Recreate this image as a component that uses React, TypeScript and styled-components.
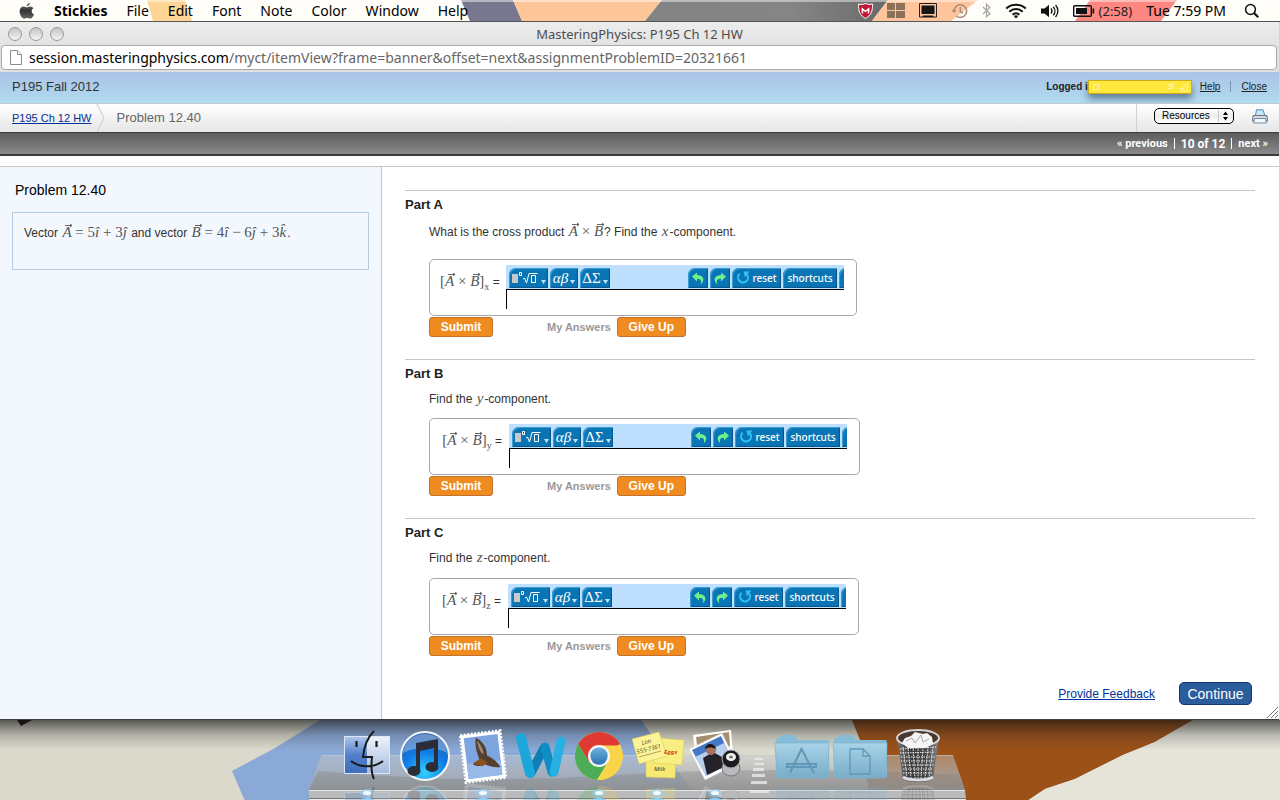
import React from "react";
import styled, { createGlobalStyle } from "styled-components";

const SANS = '"Liberation Sans", Arial, sans-serif';
const SYSTEM = '"Noto Sans", "Open Sans", sans-serif';
const NARROW = 'Roboto, "Liberation Sans", sans-serif';
const MATH = '"Liberation Serif", "Times New Roman", serif';

const GlobalStyle = createGlobalStyle`
  * { box-sizing: border-box; }
  body { margin: 0; background: #d6d4c6; font-family: ${SANS}; }
  button, input, select { font-family: inherit; margin: 0; }
  svg { display: block; }
`;

const Desktop = styled.div`
  min-height: 100vh;
  display: flex;
  flex-direction: column;
`;

/* ---------- menu bar ---------- */

const MenuBarRoot = styled.header`
  position: relative;
  height: 22px;
  display: flex;
  align-items: center;
  background: #fffdf8;
  border-bottom: 1px solid #555;
  font-family: ${SYSTEM};
  overflow: hidden;
`;

const Backdrop = styled.svg`
  position: absolute;
  inset: 0;
  width: 100%;
  height: 100%;
`;

const MenuList = styled.nav`
  position: relative;
  display: flex;
  align-items: center;
  gap: 19px;
  padding-left: 19px;
`;

const MenuButton = styled.button<{ $strong?: boolean }>`
  border: 0;
  padding: 0;
  background: none;
  color: #000;
  font-size: 14px;
  line-height: 20px;
  font-weight: ${(p) => (p.$strong ? 700 : 400)};
  white-space: nowrap;
`;

const StatusList = styled.div`
  position: relative;
  margin-left: auto;
  padding-right: 20px;
  display: flex;
  align-items: center;
  gap: 14px;
`;

const BatteryStatus = styled.div`
  display: flex;
  align-items: center;
  gap: 4px;
  font-size: 13px;
  line-height: 20px;
  color: #222;
`;

const Clock = styled.time`
  margin-right: 4px;
  font-size: 14px;
  line-height: 20px;
  white-space: nowrap;
`;

/* ---------- browser window ---------- */

const BrowserWindow = styled.main`
  margin-right: 1px;
  background: #fff;
  border-bottom: 1px solid #3f3f3f;
  border-radius: 5px 5px 0 0;
  display: flex;
  flex-direction: column;
`;

const TitleBar = styled.div`
  height: 23px;
  display: grid;
  grid-template-columns: 1fr auto 1fr;
  align-items: center;
  background: linear-gradient(#ededed, #e2e2e2);
  font-family: ${SYSTEM};
`;

const WindowControls = styled.div`
  display: flex;
  gap: 7px;
  padding-left: 8px;
`;

const WindowControl = styled.button`
  width: 14px;
  height: 14px;
  padding: 0;
  border: 1px solid #999;
  border-radius: 50%;
  background: linear-gradient(#c4c4c4, #f4f4f4);
`;

const WindowTitle = styled.div`
  font-size: 13px;
  line-height: 20px;
  color: #4d4d4d;
`;

const AddressRow = styled.div`
  height: 27px;
  padding: 0 2px 2px 1px;
  background: #e0e0e0;
`;

const AddressBox = styled.div`
  height: 25px;
  display: flex;
  align-items: center;
  gap: 7px;
  padding-left: 8px;
  background: #fff;
  border: 1px solid #a9a9a9;
  border-radius: 4px;
  font-family: ${SYSTEM};
  font-size: 14px;
  line-height: 20px;
  color: #666;
  white-space: nowrap;
  overflow: hidden;
`;

const Host = styled.span`
  color: #000;
`;

/* ---------- course header ---------- */

const CourseBar = styled.div`
  height: 31px;
  display: flex;
  align-items: center;
  justify-content: space-between;
  padding: 0 12px 2px;
  background: linear-gradient(#abc3e8, #b0dbef);
  color: #333;
`;

const CourseName = styled.div`
  font-size: 13px;
  line-height: 16px;
`;

const AccountBox = styled.div`
  display: flex;
  align-items: center;
  font-size: 10px;
  line-height: 14px;
`;

const LoggedIn = styled.strong`
  color: #222;
`;

const StickyNote = styled.div`
  width: 104px;
  height: 14px;
  margin-right: 8px;
  display: flex;
  align-items: center;
  justify-content: space-between;
  padding: 0 3px;
  background: #ffe83b;
  border: 1px solid #c9ac1c;
  box-shadow: 0 5px 7px rgba(40, 60, 90, 0.55);
`;

const NoteCorner = styled.span`
  display: flex;
  gap: 6px;
`;

const SmallLink = styled.a`
  color: #222;
  text-decoration: underline;
`;

const Separator = styled.span<{ $color: string; $gap: number }>`
  width: 1px;
  height: 11px;
  margin: 0 ${(p) => p.$gap}px;
  background: ${(p) => p.$color};
`;

const CrumbBar = styled.div`
  height: 29px;
  display: flex;
  align-items: center;
  padding-left: 12px;
  border-top: 1px solid #c6c9cc;
  background: linear-gradient(#fff, #e6e6e6);
`;

const CrumbLink = styled.a`
  font-size: 11px;
  line-height: 16px;
  color: #003399;
`;

const CrumbArrow = styled.svg`
  margin: 0 11px 0 5px;
`;

const CrumbCurrent = styled.span`
  font-size: 13px;
  line-height: 16px;
  color: #666;
`;

const CrumbTools = styled.div`
  align-self: stretch;
  margin-left: auto;
  display: flex;
  align-items: center;
  gap: 18px;
  padding: 0 11px 4px 17px;
  border-left: 1px solid #d2d2d2;
`;

const SelectWrap = styled.div`
  position: relative;
`;

const ResourceSelect = styled.select`
  appearance: none;
  display: block;
  width: 80px;
  height: 16px;
  padding: 0 7px;
  border: 1px solid #000;
  border-radius: 5px;
  background: linear-gradient(#fff, #ececec 50%, #fff);
  color: #000;
  font-size: 10px;
  line-height: 12px;
`;

const SelectArrows = styled.svg`
  position: absolute;
  right: 4px;
  top: 2px;
  pointer-events: none;
`;

const IconButton = styled.button`
  border: 0;
  padding: 0;
  background: none;
`;

const PagerBar = styled.nav`
  height: 24px;
  display: flex;
  align-items: center;
  justify-content: flex-end;
  padding-right: 11px;
  border-top: 1px solid #3e3e3e;
  border-bottom: 2px solid #3a3a3a;
  background: linear-gradient(#5c5c5c, #8a8a8a);
  color: #fff;
  font-family: ${NARROW};
  font-size: 12px;
  line-height: 16px;
  font-weight: 700;
`;

const PagerLink = styled.a`
  color: #fff;
  text-decoration: none;
  font-size: 11px;
`;

/* ---------- problem panels ---------- */

const Panels = styled.div`
  margin-top: 10px;
  border-top: 1px solid #c4c8cb;
  display: flex;
`;

const ProblemPane = styled.aside`
  flex: 0 0 382px;
  padding: 15px 12px;
  background: #f3f8fe;
  border-right: 1px solid #b9c9d8;
`;

const ProblemTitle = styled.h1`
  margin: 0 3px 13px;
  font-size: 14px;
  line-height: 17px;
  font-weight: 400;
  color: #000;
`;

const ProblemText = styled.div`
  min-height: 58px;
  padding: 10px 11px;
  border: 1px solid #b4cbe0;
  font-size: 12px;
  line-height: 20px;
  color: #333;
  white-space: nowrap;
`;

const AnswerPane = styled.section`
  position: relative;
  flex: 1;
  min-width: 0;
  padding: 23px 24px 14px 23px;
`;

const Part = styled.section`
  border-top: 1px solid #c6c6c6;
  padding: 6px 0 22px;
`;

const PartTitle = styled.h2`
  margin: 0;
  font-size: 13px;
  line-height: 16px;
  color: #222;
`;

const PartBody = styled.form`
  margin: 8px 0 0 24px;
`;

const Question = styled.p<{ $space: number; $tall?: boolean }>`
  margin: 0 0 ${(p) => p.$space}px;
  font-size: 12px;
  line-height: ${(p) => (p.$tall ? 22 : 18)}px;
  color: #333;
`;

const AnswerBox = styled.div`
  width: fit-content;
  height: 57px;
  margin-bottom: 1px;
  padding: 5px 12px 0 10px;
  display: flex;
  border: 1px solid #a6a6a6;
  border-radius: 5px;
`;

const AnswerLabel = styled.label<{ $width: number }>`
  width: ${(p) => p.$width}px;
  padding: 7px 7px 0 0;
  text-align: right;
  white-space: nowrap;
  font-size: 12px;
  line-height: 20px;
  color: #333;

  & > span {
    margin: 0;
  }
`;

const Applet = styled.div`
  width: 338px;
`;

const Toolbar = styled.div`
  height: 24px;
  display: flex;
  gap: 2px;
  padding: 3px 0 1px 3px;
  background: #bfdfff;
  overflow: hidden;
`;

const ToolGap = styled.span`
  flex: 1;
`;

const ToolButton = styled.button<{ $width: number; $greek?: boolean }>`
  flex: none;
  width: ${(p) => p.$width}px;
  height: 20px;
  padding: 0;
  display: flex;
  align-items: center;
  justify-content: center;
  gap: 1px;
  border: 0;
  border-radius: 7px 0 0 0;
  background: #0a75b5;
  box-shadow: inset 1px 1px 1px #3fa0d4, inset -1px -1px 1px #07568a;
  color: #fff;
  font-family: ${(p) => (p.$greek ? MATH : SYSTEM)};
  font-size: ${(p) => (p.$greek ? 15 : 10)}px;
  line-height: 18px;
  font-weight: ${(p) => (p.$greek ? 400 : 500)};
`;

const ClippedTool = styled.span`
  width: 5px;
  overflow: hidden;
`;

const AnswerInput = styled.input`
  display: block;
  width: 100%;
  height: 20px;
  padding: 1px 3px;
  border: 0;
  border-top: 1px solid #000;
  border-left: 1px solid #000;
  background: none;
  outline: none;
  font-size: 12px;
`;

const Actions = styled.div`
  display: flex;
  align-items: center;
`;

const OrangeButton = styled.button<{ $width: number }>`
  width: ${(p) => p.$width}px;
  height: 20px;
  padding: 0;
  border: 1px solid #c4702e;
  border-radius: 3px;
  background: #ef8b1f;
  color: #fff;
  font-size: 12px;
  line-height: 16px;
  font-weight: 700;
`;

const MyAnswers = styled.span`
  margin: 0 6px 0 54px;
  font-size: 11px;
  line-height: 16px;
  font-weight: 700;
  color: #999;
`;

const PaneFooter = styled.footer`
  display: flex;
  align-items: center;
  justify-content: flex-end;
  gap: 24px;
  padding: 4px 3px 0 0;
`;

const FeedbackLink = styled.a`
  font-size: 12px;
  line-height: 16px;
  color: #003399;
`;

const ContinueButton = styled.button`
  width: 73px;
  height: 23px;
  padding: 0;
  border: 1px solid #12386c;
  border-radius: 5px;
  background: #2b5c9b;
  color: #fff;
  font-size: 14px;
  line-height: 18px;
`;

const ResizeGrip = styled.svg`
  position: absolute;
  right: 1px;
  bottom: 1px;
`;

/* ---------- math ---------- */

const MathText = styled.span`
  margin: 0 1px;
  font-family: ${MATH};
  font-size: 15px;
  line-height: 16px;
  color: #555;
  white-space: nowrap;
`;

const MathVar = styled.i`
  position: relative;
`;

const Accent = styled.svg`
  position: absolute;
  left: 3px;
  top: -1px;
`;

const MathSub = styled.sub`
  font-size: 10px;
  line-height: 1px;
`;

const Vec = ({ children }: { children: string }) => (
  <MathVar>
    {children}
    <Accent width="8" height="5" viewBox="0 0 8 5" fill="none" stroke="#555">
      <path d="M0 2.500H7M5 1L7 2.500 5 4" strokeWidth=".9" />
    </Accent>
  </MathVar>
);

const Cross = () => (
  <>
    <Vec>A</Vec> × <Vec>B</Vec>
  </>
);

/* ---------- icons ---------- */

const AppleIcon = () => (
  <svg width="16" height="18" viewBox="0 0 16 18">
    <defs>
      <linearGradient id="apple" x2="0" y2="1">
        <stop stopColor="#777" />
        <stop offset=".5" stopColor="#333" />
        <stop offset="1" stopColor="#666" />
      </linearGradient>
    </defs>
    <path
      fill="url(#apple)"
      d="M10.9.8c.1 1.800-1.500 3.600-3.200 3.500C7.500 2.600 9.200.9 10.900.8zM8 5.400c.7 0 1.800-.9 3.300-.8 1.300.1 2.400.6 3.100 1.600-2.600 1.600-2.200 5 .6 6.100-.6 1.700-2 4.400-3.700 4.400-1.100 0-1.600-.7-3-.7s-2 .7-3 .7C3.200 16.700.6 13 .6 9.500c0-3.200 2-4.900 4.100-4.900 1.400 0 2.500.8 3.300.8z"
    />
  </svg>
);

const ShieldIcon = () => (
  <svg width="15" height="16" viewBox="0 0 15 16">
    <path d="M.6 1Q4 2.200 7.500.6 11 2.200 14.400 1c.5 7-1.400 11.500-6.900 14.400C2 12.500.1 8 .6 1z" fill="#c01735" stroke="#fff" />
    <path d="M3.600 9.600V4.200l3.900 3.200 3.900-3.200v5.400L9.800 11V7.400L7.500 9.300 5.200 7.400V11z" fill="#fff" />
  </svg>
);

const SpacesIcon = () => (
  <svg width="18" height="16" viewBox="0 0 18 16" fill="#8c7059">
    <path d="M0 0h8v7H0zM9 0h9v7H9zM0 8h8v7H0zM9 8h9v7H9z" />
  </svg>
);

const DisplayIcon = () => (
  <svg width="18" height="15" viewBox="0 0 18 15">
    <path d="M3 14H.5V.5h17V14H15" fill="none" stroke="#222" />
    <path d="M2.500 2.500h13v8.500h-13zM4 12.500h10l1.500 2h-13z" fill="#161616" />
  </svg>
);

const TimeMachineIcon = () => (
  <svg width="17" height="16" viewBox="0 0 17 16" fill="none" stroke="#a98c76" strokeWidth="1.500">
    <path d="M3 8a6.300 6.300 0 1 1 2 4.700M9.300 4v4.500l2.700 1.700" />
    <path d="M.5 7h5L3 10z" fill="#a98c76" stroke="none" />
  </svg>
);

const BluetoothIcon = () => (
  <svg width="9" height="15" viewBox="0 0 9 15" fill="none" stroke="#a5a5a5" strokeWidth="1.200">
    <path d="M1 4l7 6.500-3.500 3.300V1.200L8 4.500 1 11" />
  </svg>
);

const WifiIcon = () => (
  <svg width="22" height="16" viewBox="0 0 22 16" fill="none" stroke="#111" strokeWidth="2">
    <path d="M1.200 5.500c5.500-5 14.100-5 19.600 0M4.300 8.800c4-3.600 9.400-3.600 13.400 0M7.500 11.800c2.200-1.900 4.800-1.900 7 0" />
    <path d="M8.800 13l2.200 2.600 2.200-2.600c-1.300-1-3.100-1-4.400 0z" fill="#111" stroke="none" />
  </svg>
);

const SoundIcon = () => (
  <svg width="18" height="14" viewBox="0 0 18 14">
    <path d="M0 4.500h3.500L8 .8v12.400L3.500 9.500H0z" fill="#111" />
    <path d="M10 4.500c1.200 1.500 1.200 3.500 0 5M12.300 2.700c2.200 2.500 2.200 6.100 0 8.600M14.600 1c3 3.500 3 8.500 0 12" fill="none" stroke="#111" strokeWidth="1.300" />
  </svg>
);

const BatteryIcon = () => (
  <svg width="22" height="12" viewBox="0 0 22 12">
    <rect x=".7" y=".7" width="17.600" height="10.600" rx="1" fill="none" stroke="#111" strokeWidth="1.400" />
    <path d="M3 3h11v6H3z" fill="#111" />
    <path d="M19.500 3.500h1.700v5h-1.700z" fill="#111" />
  </svg>
);

const SearchIcon = () => (
  <svg width="16" height="16" viewBox="0 0 16 16" fill="none" stroke="#111">
    <circle cx="6.500" cy="6.500" r="4.900" strokeWidth="1.500" />
    <path d="M10 10l4.300 4.300" strokeWidth="2.200" />
  </svg>
);

const PageIcon = () => (
  <svg width="12" height="15" viewBox="0 0 12 15" fill="#fff" stroke="#8b8b8b">
    <path d="M.5.500h7l4 4v10h-11z" />
    <path d="M7.500.5v4h4" />
  </svg>
);

const PrinterIcon = () => (
  <svg width="16" height="15" viewBox="0 0 16 15">
    <path d="M3.500 6.500L4.500.800h6.500l2 5.700z" fill="#c5e6fa" stroke="#5b8db8" />
    <path d="M1 6.500h14l.5 5.500H.5z" fill="#d5d8dc" stroke="#6b7480" />
    <path d="M2.500 9.500h11l.8 4.500H1.700z" fill="#f4f8fb" stroke="#6b8fae" />
  </svg>
);

const DropMark = () => (
  <svg width="6" height="14" viewBox="0 0 6 14">
    <path d="M1 9h5L3.500 13z" fill="#bfe4fb" />
  </svg>
);

const RootIcon = () => (
  <svg width="28" height="16" viewBox="0 0 28 16" fill="none" stroke="#fff">
    <path d="M1 4h6v9H1z" fill="#c9c9c9" stroke="none" />
    <path d="M8.500 2.500h2v3h-2z" />
    <path d="M12 9l1.500-1 2 5L18 3.500h8.500" />
    <path d="M20.500 5.500h4v7h-4z" />
  </svg>
);

/* the hook starts high on the tail side and curls below the arrow head */
const UndoIcon = () => (
  <svg width="14" height="16" viewBox="0 0 14 16">
    <path d="M1 6.500L6 2.500v2.500c6.500.3 8.500 5 3.500 9.500 1.500-3.500.5-5.600-3.500-5.700v2.700z" fill="#6ff08c" />
  </svg>
);

const RedoIcon = () => (
  <svg width="14" height="16" viewBox="0 0 14 16">
    <path d="M13 6.500L8 2.500v2.500c-6.500.3-8.500 5-3.500 9.500C3 11 4 8.900 8 8.800v2.700z" fill="#6ff08c" />
  </svg>
);

const ResetIcon = () => (
  <svg width="15" height="16" viewBox="0 0 15 16">
    <path d="M3.600 3.800a5 5 0 1 0 7.400.5" fill="none" stroke="#2fc3f3" strokeWidth="2" />
    <path d="M7.500 1.500h5.800L9 7.500z" fill="#2fc3f3" />
  </svg>
);

/* ---------- answer parts ---------- */

type PartProps = {
  id: string;
  question: React.ReactNode;
  axis: string;
  labelWidth: number;
  space: number;
  tall?: boolean;
};

const AnswerPart = ({ id, question, axis, labelWidth, space, tall }: PartProps) => (
  <Part>
    <PartTitle>Part {id}</PartTitle>
    <PartBody onSubmit={(e) => e.preventDefault()}>
      <Question $space={space} $tall={tall}>{question}</Question>
      <AnswerBox>
        <AnswerLabel $width={labelWidth} htmlFor={`answer-${id}`}>
          <MathText>
            [<Cross />]<MathSub>{axis}</MathSub>
          </MathText>{" "}
          =
        </AnswerLabel>
        <Applet>
          <Toolbar>
            <ToolButton type="button" $width={39} aria-label="Templates">
              <RootIcon />
              <DropMark />
            </ToolButton>
            <ToolButton type="button" $width={28} $greek>
              <i>αβ</i>
              <DropMark />
            </ToolButton>
            <ToolButton type="button" $width={30} $greek>
              ΔΣ
              <DropMark />
            </ToolButton>
            <ToolGap />
            <ToolButton type="button" $width={20} aria-label="Undo">
              <UndoIcon />
            </ToolButton>
            <ToolButton type="button" $width={20} aria-label="Redo">
              <RedoIcon />
            </ToolButton>
            <ToolButton type="button" $width={49}>
              <ResetIcon />
              reset
            </ToolButton>
            <ToolButton type="button" $width={54}>
              shortcuts
            </ToolButton>
            <ClippedTool>
              <ToolButton type="button" $width={20} aria-label="Help" />
            </ClippedTool>
          </Toolbar>
          <AnswerInput id={`answer-${id}`} type="text" />
        </Applet>
      </AnswerBox>
      <Actions>
        <OrangeButton type="submit" $width={64}>Submit</OrangeButton>
        <MyAnswers>My Answers</MyAnswers>
        <OrangeButton type="button" $width={69}>Give Up</OrangeButton>
      </Actions>
    </PartBody>
  </Part>
);

/* ---------- dock ---------- */

const DockArea = styled.div`
  position: relative;
  flex: 1;
  min-height: 81px;
  display: flex;
  justify-content: center;
  align-items: flex-end;
  overflow: hidden;
`;

const DockShelf = styled.div`
  position: relative;
  width: 662px;
  height: 81px;
  padding-left: 29px;
  display: flex;
`;

const DockItem = styled.button`
  position: relative;
  width: 58px;
  height: 81px;
  padding: 0;
  border: 0;
  background: none;
`;

const DockDivider = styled.svg`
  position: relative;
`;

type DockIconProps = {
  label: string;
  running?: boolean;
  overlay?: React.ReactNode;
  children: React.ReactNode;
};

const DockIcon = ({ label, running, overlay, children }: DockIconProps) => (
  <DockItem type="button" aria-label={label}>
    <svg width="58" height="81" viewBox="0 0 58 81">
      {children}
      {overlay}
      <g opacity=".22" transform="matrix(1 0 0 -1 0 126)">
        {children}
      </g>
      {running && (
        <>
          <ellipse cx="29" cy="73" rx="7" ry="4" fill="#8fd4ff" opacity=".5" />
          <ellipse cx="29" cy="73" rx="4" ry="2" fill="#f4fbff" />
          <ellipse cx="29" cy="80" rx="7" ry="2" fill="#8fd4ff" />
        </>
      )}
    </svg>
  </DockItem>
);

const Finder = () => (
  <>
    <path d="M6 16h23v38H6z" fill="url(#finderDark)" />
    <path d="M29 16h23v38H29z" fill="url(#finderLight)" />
    <path d="M6.500 16.500h45v37h-45z" fill="none" stroke="#dbe6f7" />
    <path d="M36 11c-6 6-10 16-11 26h9c-1 9-1 16 2 22M13 41c9 7 23 7 32 0" fill="none" stroke="#1b1b1d" strokeWidth="2" />
    <path d="M18.500 21v6M38.500 21v6" stroke="#1b1b1d" strokeWidth="2.200" />
  </>
);

const ITunes = () => (
  <>
    <circle cx="29" cy="36" r="24" fill="url(#itunes)" stroke="#f4f4f6" strokeWidth="2" />
    <path d="M7 33a22 19 0 0 1 44 0c-12-7-32-6-44 0z" fill="#fff" opacity=".3" />
    <path d="M20 23l22-4v28h-4V28l-14 3v20h-4z" fill="#2b2e38" />
    <ellipse cx="18" cy="51" rx="6.500" ry="5" fill="#2b2e38" />
    <ellipse cx="36" cy="47" rx="6.500" ry="5" fill="#2b2e38" />
  </>
);

const Mail = () => (
  <g transform="rotate(-7 29 36)">
    <path d="M9 13h40v47H9z" fill="#fff" stroke="#fff" strokeWidth="3" strokeDasharray="2 1.500" />
    <path d="M12 16h34v41H12z" fill="#7fa5e0" />
    <path d="M12 42h34v15H12z" fill="#98b8ea" />
    <path d="M24 17c6 4 10 10 9 19 5 3 9 7 12 13-6 0-11-2-16-5-3 2-8 2-11-1l7-4c-2-8-3-14-1-22z" fill="#54402f" />
    <path d="M25 20c3 4 5 9 5 14l-2-1c-2-4-3-8-3-13z" fill="#a08a72" />
    <path d="M18 42l9-4 6 5-6 3z" fill="#8a4f1e" />
  </g>
);

const Word = () => (
  <>
    <path d="M19 53L32 28" fill="none" stroke="#0c7fb4" strokeWidth="9" strokeLinecap="round" />
    <path d="M9 18l9 35" fill="none" stroke="#1ba7dc" strokeWidth="10" strokeLinecap="round" />
    <path d="M33 27l7 25" fill="none" stroke="#0f8ec6" strokeWidth="9" strokeLinecap="round" />
    <path d="M49 21l-7 31" fill="none" stroke="#27b0e2" strokeWidth="9" strokeLinecap="round" />
  </>
);

const Chrome = () => (
  <>
    <circle cx="29" cy="36" r="24" fill="#fbd34b" />
    <path d="M29 36L50 24A24.300 24.300 0 0 0 8.200 24L19 42z" fill="#de3a31" />
    <path d="M8.200 24A24 24 0 0 0 27 60l11-18-9 4-10-4z" fill="#4bad55" />
    <path d="M29 25.500h20.800A24 24 0 0 1 27 60L38 42z" fill="#f9d348" />
    <circle cx="29" cy="36" r="11" fill="#f7f7f7" />
    <circle cx="29" cy="36" r="8.700" fill="url(#chromeBlue)" />
  </>
);

const Handwriting = styled.text`
  font-family: ${SYSTEM};
  font-style: italic;
`;

const StickiesApp = () => (
  <>
    <path d="M18 36l30 1-1 21-29-1z" fill="#f6ea72" stroke="#d4c65a" strokeWidth=".5" />
    <path d="M29 18l27 2-2 25-29-2z" fill="#f9ee82" stroke="#d4c65a" strokeWidth=".5" />
    <path d="M4 19l27-7 8 24-28 8z" fill="#fcf397" stroke="#d4c65a" strokeWidth=".5" />
  </>
);

const StickiesNotes = () => (
  <>
    <Handwriting x="14" y="25" fontSize="6" fill="#5d5a2c" transform="rotate(-14 14 25)">Lon</Handwriting>
    <Handwriting x="9" y="34" fontSize="6" fill="#5d5a2c" transform="rotate(-14 9 34)">555-7361</Handwriting>
    <path d="M11 37l22-6" stroke="#8a8540" strokeWidth=".7" />
    <Handwriting x="36" y="34" fontSize="6" fontWeight="700" fill="#d8431b">Eggs</Handwriting>
    <Handwriting x="26" y="51" fontSize="6" fill="#333">Milk</Handwriting>
  </>
);

const Preview = () => (
  <>
    <path d="M7 15l38-5 2 24-37 5z" fill="#fff" />
    <path d="M10 17l33-5 1 14-32 7z" fill="#a58e6c" />
    <path d="M3 29l33-16 15 31-32 16z" fill="#fff" stroke="#ccc" strokeWidth=".5" />
    <path d="M6 30l29-14 12 26-27 14z" fill="#4477c4" />
    <path d="M9 37l29-14 9 19-27 14z" fill="#b9cfee" />
    <path d="M17 38l10-6 9 5 4 9-19 9z" fill="#25232a" />
    <circle cx="25" cy="30" r="5" fill="#a9735c" />
    <path d="M19 29c0-6 10-7 11 0-4-2-7-2-11 0z" fill="#1b1718" />
    <ellipse cx="45" cy="48" rx="9" ry="8" fill="#b8babd" stroke="#777" />
    <circle cx="45" cy="39" r="9" fill="#1c1d1f" stroke="#aaa" />
    <ellipse cx="45" cy="37" rx="5" ry="4" fill="#f4f4f4" />
    <ellipse cx="45" cy="37" rx="2" ry="1.500" fill="#777" />
  </>
);

const Folder = ({ children }: { children: React.ReactNode }) => (
  <>
    <path d="M3 20q0-2 2-2l2-1q0-2 2-2h12q2 0 2 2l2 3h29q2 0 2 2v35H3z" fill="#86bcd8" />
    <path d="M2 23h54l-1 34q0 1-1 1H5q-1 0-1-1z" fill="url(#folder)" stroke="#7eb2cc" strokeWidth=".7" />
    <g fill="none" stroke="#5f98b6" strokeWidth="2">{children}</g>
  </>
);

const Trash = () => (
  <>
    <path d="M8 17l6 42c5 4 25 4 30 0l6-42z" fill="url(#trash)" />
    <path
      d="M11 29l36-2M11 33l35-1M12 37l34 0M12 41h33M13 45h32M14 49h30M14 53h29M14 27l4 30M19 27l3 31M24 27l2 32M29 27v32M34 27l-2 32M39 27l-3 31M44 27l-4 30"
      stroke="#eee"
      strokeWidth="1"
      strokeDasharray="1.500 1"
    />
    <ellipse cx="29" cy="18" rx="21" ry="8" fill="#48382d" stroke="#d4d4da" strokeWidth="2" />
    <path d="M13 23l3-5 6-2 4-4 8 2 4-1 5 4 1 7-7 4H19z" fill="#f5f5f5" />
    <path d="M17 21l6-3 3 5 6-8 2 7 6-3" fill="none" stroke="#aaa" />
    <path d="M14 57c6 4 24 4 30 0" fill="none" stroke="#dcdce4" strokeWidth="3" />
  </>
);

const DockDefs = () => (
  <defs>
    <linearGradient id="finderDark" x2="0" y2="1"><stop stopColor="#b3c9ee" /><stop offset=".5" stopColor="#5180cb" /><stop offset="1" stopColor="#3f6dbc" /></linearGradient>
    <linearGradient id="finderLight" x2="0" y2="1"><stop stopColor="#eef3fb" /><stop offset="1" stopColor="#a5bbdc" /></linearGradient>
    <radialGradient id="itunes" cy=".85" r=".75"><stop stopColor="#2fd0ff" /><stop offset=".6" stopColor="#0f7be6" /><stop offset="1" stopColor="#2a62b0" /></radialGradient>
    <linearGradient id="chromeBlue" x2="0" y2="1"><stop stopColor="#6fb2de" /><stop offset="1" stopColor="#2b73b4" /></linearGradient>
    <linearGradient id="folder" x2="0" y2="1"><stop stopColor="#a8d3e8" /><stop offset="1" stopColor="#78acc8" /></linearGradient>
    <linearGradient id="trash"><stop stopColor="#777" /><stop offset=".3" stopColor="#3c3c3e" /><stop offset=".7" stopColor="#454547" /><stop offset="1" stopColor="#8a8a8c" /></linearGradient>
    <linearGradient id="shelf" x2="0" y2="1"><stop stopColor="#c4c8cb" stopOpacity=".45" /><stop offset=".5" stopColor="#b0b2b4" stopOpacity=".7" /><stop offset="1" stopColor="#9a9b9c" stopOpacity=".9" /></linearGradient>
    <linearGradient id="windowShade" x2="0" y2="1"><stop stopColor="#111" stopOpacity=".65" /><stop offset=".5" stopColor="#222" stopOpacity=".22" /><stop offset="1" stopColor="#333" stopOpacity="0" /></linearGradient>
  </defs>
);

const Dock = () => (
  <DockArea>
    <Backdrop viewBox="0 0 1280 81" preserveAspectRatio="none">
      <DockDefs />
      <path d="M0 0h1280v81H0z" fill="#dbd9cc" />
      <path d="M320 0L275 28 232 51 245 81H700L641 0z" fill="#8ba9d6" />
      <path d="M852 0l10 25 8 56h157l18-12 30-10 48-24 32-13 38-22z" fill="#9b5118" />
      <path d="M1193 0l-38 22-32 13-48 24-30 10-18 12h253V0z" fill="#e4e4d9" />
      <path d="M17 0h15L21 6z" fill="#1c1410" />
      <path d="M0 0h1280v30H0z" fill="url(#windowShade)" />
    </Backdrop>
    <DockShelf>
      <Backdrop viewBox="0 0 662 81">
        <path d="M12 35h632l12 35H0z" fill="url(#shelf)" />
        <path d="M12 35.500h632" stroke="#c9ced2" opacity=".6" />
        <path d="M9 51q150 14 300 4t340 0l7 15H0z" fill="#777" opacity=".3" />
        <path d="M0 70h656l1 9H0z" fill="#b9babb" />
        <path d="M0 70.500h656" stroke="#e3e3e3" />
        <path d="M0 78.500h657" stroke="#777" />
        <path d="M0 79h657v2H0z" fill="#e8e8e8" />
      </Backdrop>
      <DockIcon label="Finder" running><Finder /></DockIcon>
      <DockIcon label="iTunes"><ITunes /></DockIcon>
      <DockIcon label="Mail" running><Mail /></DockIcon>
      <DockIcon label="Word"><Word /></DockIcon>
      <DockIcon label="Chrome" running><Chrome /></DockIcon>
      <DockIcon label="Stickies" running overlay={<StickiesNotes />}><StickiesApp /></DockIcon>
      <DockIcon label="Preview" running><Preview /></DockIcon>
      <DockDivider width="29" height="81" viewBox="0 0 29 81" fill="#eee" opacity=".75">
        <path d="M10 38h9v2h-9zM10 43h10v2H10zM9 48h11v3H9zM8 54h13v3H8zM7 61h16v3H7zM6 70h19v3H6z" />
      </DockDivider>
      <DockIcon label="Applications">
        <Folder>
          <path d="M29 28L17 53M28 28l13 25M14 44h29v3H14z" />
        </Folder>
      </DockIcon>
      <DockIcon label="Documents">
        <Folder>
          <path d="M19 29h13l7 7v18H19zM32 29v7h7" strokeWidth="1.300" />
        </Folder>
      </DockIcon>
      <DockIcon label="Trash"><Trash /></DockIcon>
    </DockShelf>
  </DockArea>
);

/* ---------- page ---------- */

const MENUS = ["File", "Edit", "Font", "Note", "Color", "Window", "Help"];

const MenuBar = () => (
  <MenuBarRoot>
    <Backdrop viewBox="0 0 1280 22" preserveAspectRatio="none">
      <defs>
        <linearGradient id="slate" x1="645" x2="888" gradientUnits="userSpaceOnUse"><stop stopColor="#838383" /><stop offset=".6" stopColor="#858585" /><stop offset="1" stopColor="#6a6a6a" /></linearGradient>
      </defs>
      <path d="M147 0h38l7 22h-39z" fill="#ffd596" />
      <path d="M461 0h52l9 22h-52z" fill="#777790" />
      <path d="M513 0h149l-17 22H522z" fill="#fdc698" />
      <path d="M662 0h226l-16 22H645z" fill="url(#slate)" />
      <path d="M888 0h90l-27 22h-79z" fill="#ffc49b" />
      <path d="M1090 0h87l-16 22h-86z" fill="#ff8781" />
      <path d="M0 0h1280v2H0z" fill="#fff" opacity=".45" />
    </Backdrop>
    <MenuList aria-label="Menu bar">
      <MenuButton aria-label="Apple"><AppleIcon /></MenuButton>
      <MenuButton $strong>Stickies</MenuButton>
      {MENUS.map((m) => (
        <MenuButton key={m}>{m}</MenuButton>
      ))}
    </MenuList>
    <StatusList>
      <ShieldIcon />
      <SpacesIcon />
      <DisplayIcon />
      <TimeMachineIcon />
      <BluetoothIcon />
      <WifiIcon />
      <SoundIcon />
      <BatteryStatus>
        <BatteryIcon />
        (2:58)
      </BatteryStatus>
      <Clock>Tue 7:59 PM</Clock>
      <SearchIcon />
    </StatusList>
  </MenuBarRoot>
);

export default function App() {
  return (
    <Desktop>
      <GlobalStyle />
      <MenuBar />
      <BrowserWindow>
        <TitleBar>
          <WindowControls>
            <WindowControl aria-label="Close window" />
            <WindowControl aria-label="Minimize window" />
            <WindowControl aria-label="Zoom window" />
          </WindowControls>
          <WindowTitle>MasteringPhysics: P195 Ch 12 HW</WindowTitle>
        </TitleBar>
        <AddressRow>
          <AddressBox>
            <PageIcon />
            <span>
              <Host>session.masteringphysics.com</Host>
              /myct/itemView?frame=banner&amp;offset=next&amp;assignmentProblemID=20321661
            </span>
          </AddressBox>
        </AddressRow>
        <CourseBar>
          <CourseName>P195 Fall 2012</CourseName>
          <AccountBox>
            <LoggedIn>Logged i</LoggedIn>
            <StickyNote>
              <svg width="8" height="8" viewBox="0 0 8 8" fill="none" stroke="#fff6a8"><path d="M1.500 1.500h5v5h-5z" /></svg>
              <NoteCorner>
                <svg width="8" height="8" viewBox="0 0 8 8" fill="none" stroke="#fff6a8"><path d="M1.500 6.500h5v-5M3 2h2v2H3z" /></svg>
                <svg width="8" height="10" viewBox="0 0 8 10" fill="none" stroke="#fff6a8"><path d="M7.500 1v8h-7V6.500H4V3h3.500" /></svg>
              </NoteCorner>
            </StickyNote>
            <SmallLink href="#help">Help</SmallLink>
            <Separator $color="#8094a8" $gap={10} />
            <SmallLink href="#close">Close</SmallLink>
          </AccountBox>
        </CourseBar>
        <CrumbBar>
          <CrumbLink href="#assignment">P195 Ch 12 HW</CrumbLink>
          <CrumbArrow width="9" height="28" viewBox="0 0 9 28" fill="none">
            <path d="M1 0l7 14-7 14" stroke="#c9c9c9" />
          </CrumbArrow>
          <CrumbCurrent>Problem 12.40</CrumbCurrent>
          <CrumbTools>
            <SelectWrap>
              <ResourceSelect aria-label="Resources">
                <option>Resources</option>
              </ResourceSelect>
              <SelectArrows width="12" height="12" viewBox="0 0 12 12">
                <path d="M.5 0v12" stroke="#c4c4c4" />
                <path d="M5 5h5L7.500 1.500zM5 7h5l-2.500 3.500z" fill="#000" />
              </SelectArrows>
            </SelectWrap>
            <IconButton aria-label="Print"><PrinterIcon /></IconButton>
          </CrumbTools>
        </CrumbBar>
        <PagerBar aria-label="Problems">
          <PagerLink href="#previous">« previous</PagerLink>
          <Separator $color="#fff" $gap={6} />
          <span>10 of 12</span>
          <Separator $color="#fff" $gap={6} />
          <PagerLink href="#next">next »</PagerLink>
        </PagerBar>
        <Panels>
          <ProblemPane>
            <ProblemTitle>Problem 12.40</ProblemTitle>
            <ProblemText>
              Vector{" "}
              <MathText>
                <Vec>A</Vec> = 5<i>î</i> + 3<i>ĵ</i>
              </MathText>{" "}
              and vector{" "}
              <MathText>
                <Vec>B</Vec> = 4<i>î</i> − 6<i>ĵ</i> + 3<i>k̂</i>
              </MathText>
              .
            </ProblemText>
          </ProblemPane>
          <AnswerPane>
            <AnswerPart
              id="A"
              tall
              space={16}
              axis="x"
              labelWidth={66}
              question={
                <>
                  What is the cross product <MathText><Cross /></MathText>? Find the{" "}
                  <MathText><i>x</i></MathText>-component.
                </>
              }
            />
            <AnswerPart
              id="B"
              space={10}
              axis="y"
              labelWidth={69}
              question={<>Find the <MathText><i>y</i></MathText>-component.</>}
            />
            <AnswerPart
              id="C"
              space={11}
              axis="z"
              labelWidth={68}
              question={<>Find the <MathText><i>z</i></MathText>-component.</>}
            />
            <PaneFooter>
              <FeedbackLink href="#feedback">Provide Feedback</FeedbackLink>
              <ContinueButton>Continue</ContinueButton>
            </PaneFooter>
            <ResizeGrip width="11" height="11" viewBox="0 0 11 11" stroke="#777">
              <path d="M0 11L11 0M4 11l7-7M8 11l3-3" />
            </ResizeGrip>
          </AnswerPane>
        </Panels>
      </BrowserWindow>
      <Dock />
    </Desktop>
  );
}
